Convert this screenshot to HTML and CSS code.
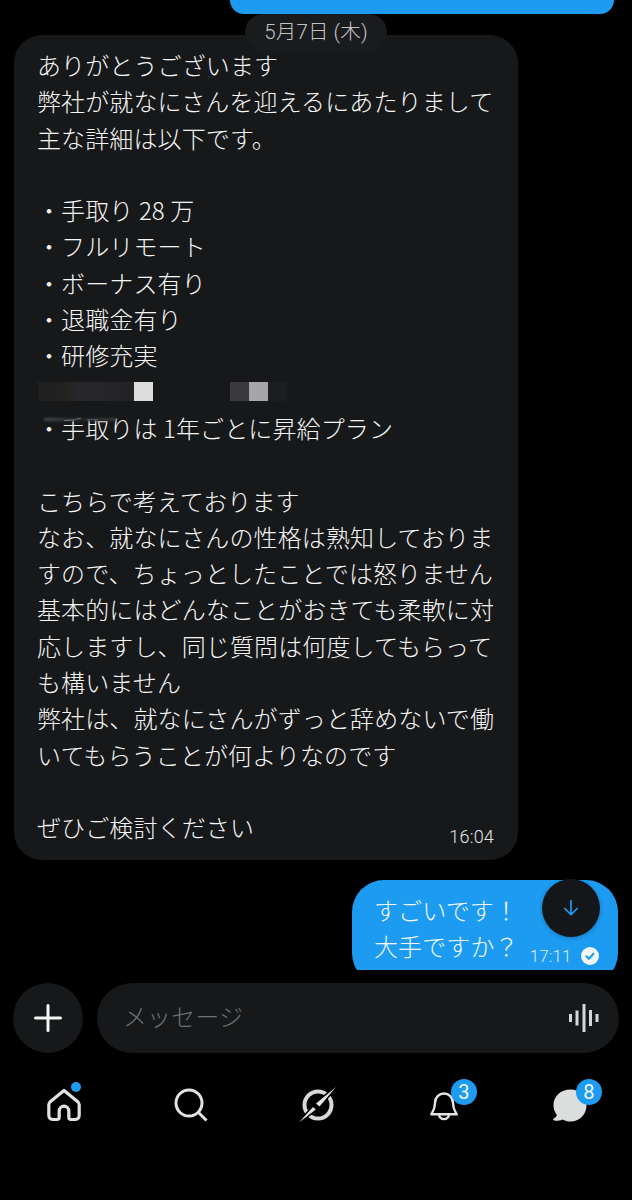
FILE: index.html
```html
<!DOCTYPE html>
<html lang="ja">
<head>
<meta charset="utf-8">
<title>メッセージ</title>
<link rel="stylesheet" href="styles.css">
</head>
<body>
<main class="app">
  <section class="messages">
    <div class="sent-top"></div>
    <div class="date-pill">5月7日 (木)</div>
    <article class="bubble-in">
      <div class="line">ありがとうございます</div>
      <div class="line">弊社が就なにさんを迎えるにあたりまして</div>
      <div class="line">主な詳細は以下です。</div>
      <div class="line">&nbsp;</div>
      <div class="line">・手取り 28 万</div>
      <div class="line">・フルリモート</div>
      <div class="line">・ボーナス有り</div>
      <div class="line">・退職金有り</div>
      <div class="line">・研修充実</div>
      <div class="line redact">
        <span class="cell c1"></span><span class="cell c2"></span><span class="cell c3"></span><span class="cell c4"></span><span class="cell c5"></span>
      </div>
      <div class="line streaked"><span class="streak"></span>・手取りは 1年ごとに昇給プラン</div>
      <div class="line">&nbsp;</div>
      <div class="line">こちらで考えております</div>
      <div class="line">なお、就なにさんの性格は熟知しておりま</div>
      <div class="line">すので、ちょっとしたことでは怒りません</div>
      <div class="line">基本的にはどんなことがおきても柔軟に対</div>
      <div class="line">応しますし、同じ質問は何度してもらって</div>
      <div class="line">も構いません</div>
      <div class="line">弊社は、就なにさんがずっと辞めないで働</div>
      <div class="line">いてもらうことが何よりなのです</div>
      <div class="line">&nbsp;</div>
      <div class="line last"><span>ぜひご検討ください</span><time class="time-in">16:04</time></div>
    </article>
    <article class="bubble-out">
      <div class="line">すごいです！</div>
      <div class="line reply"><span>大手ですか？</span>
        <span class="meta"><time>17:11</time>
          <svg class="check" viewBox="0 0 18 18" aria-hidden="true"><circle cx="9" cy="9" r="9" fill="#f2f6f9"/><path d="M5.400 9.300l2.500 2.400 4.600-5" fill="none" stroke="#1d9bf0" stroke-width="2" stroke-linecap="round" stroke-linejoin="round"/></svg>
        </span>
      </div>
    </article>
    <button class="scroll-down" aria-label="下へ">
      <svg viewBox="0 0 20 20" width="20" height="20" aria-hidden="true"><path d="M10 2.500v14M3.800 10.500l6.200 6.200 6.200-6.200" fill="none" stroke="#1d9bf0" stroke-width="1.700" stroke-linecap="round" stroke-linejoin="round"/></svg>
    </button>
  </section>

  <section class="composer">
    <button class="plus" aria-label="追加">
      <svg viewBox="0 0 28 28" width="28" height="28" aria-hidden="true"><path d="M14 1.500v25M1.500 14h25" fill="none" stroke="#f4f5f5" stroke-width="3" stroke-linecap="round"/></svg>
    </button>
    <div class="input">
      <span class="placeholder">メッセージ</span>
      <svg viewBox="0 0 30 30" width="30" height="30" aria-hidden="true"><path d="M1.500 11v8M8 7.500v15M15 1v28M21.500 7v16M28 11v8" fill="none" stroke="#d6d7d8" stroke-width="3"/></svg>
    </div>
  </section>

  <nav class="tabs">
    <div class="tab">
      <svg viewBox="0 0 34 34" width="34" height="34" aria-hidden="true"><path d="M17 2.500L3.500 13.500c-1 .8-1.700 1.900-1.700 3.200v10.500c0 2.500 1.800 4.300 4.300 4.300h3.900c1.300 0 2.200-.9 2.200-2.200v-6.300a4.800 4.800 0 0 1 9.600 0v6.300c0 1.300.9 2.200 2.200 2.200h3.900c2.500 0 4.300-1.800 4.300-4.300V16.700c0-1.300-.7-2.400-1.700-3.200z" fill="none" stroke="#e2e3e3" stroke-width="3.200" stroke-linejoin="round"/></svg>
      <span class="dot"></span>
    </div>
    <div class="tab">
      <svg viewBox="0 0 34 34" width="34" height="34" aria-hidden="true"><circle cx="15" cy="15" r="13" fill="none" stroke="#e2e3e3" stroke-width="3"/><path d="M24.500 24.500l8 8" fill="none" stroke="#e2e3e3" stroke-width="3"/></svg>
    </div>
    <div class="tab">
      <svg viewBox="0 0 40 40" width="40" height="40" aria-hidden="true"><circle cx="20" cy="20" r="13.500" fill="none" stroke="#d8d9d9" stroke-width="4"/><path d="M38 2L21.500 21.500 18 18.500zM1 37.500L15 22l2.800 2.400z" fill="#e4e5e5" stroke="#000" stroke-width="3" paint-order="stroke"/></svg>
    </div>
    <div class="tab">
      <svg class="bell" viewBox="0 0 32 34" aria-hidden="true"><path d="M5.800 13a10.200 10.200 0 0 1 20.400 0c0 7 2.300 10 4.300 13.500H1.500C3.500 23 5.800 20 5.800 13z" fill="none" stroke="#e2e3e3" stroke-width="2.800" stroke-linejoin="round"/><path d="M10.500 27a5.500 5 0 0 0 11 0" fill="none" stroke="#e2e3e3" stroke-width="2.800"/></svg>
      <span class="badge badge-bell">3</span>
    </div>
    <div class="tab">
      <svg class="chat" viewBox="0 0 36 34" aria-hidden="true"><path d="M19 .5C9 .5 1.500 7.500 1.500 16.500c0 4 1.300 7.500 3.500 10.200-.5 1.600-2 3.300-4 4.300 0 1.300 1.500 1.800 3 1.800 2.500 0 4.800-.5 6.600-1.500 2.500 1.300 5.400 2.200 8.400 2.200 9.500 0 16.500-7.500 16.500-16.500S28.500.5 19 .5z" fill="#dcdddd"/></svg>
      <span class="badge badge-chat">8</span>
    </div>
  </nav>
</main>
</body>
</html>
```

FILE: styles.css
```css
* { box-sizing: border-box; }
html, body { margin: 0; padding: 0; background: #000; }
body {
  width: 632px;
  height: 1200px;
  overflow: hidden;
  font-family: "Noto Sans CJK JP", "Noto Sans", sans-serif;
  font-weight: 300;
  font-size: 24px;
  letter-spacing: .12px;
  color: #f4f5f5;
}
button { border: 0; padding: 0; font: inherit; }

.app { display: flex; flex-direction: column; height: 1200px; }

.messages { position: relative; height: 970px; overflow: hidden; flex: none; }

.sent-top {
  margin-left: 230px;
  width: 384px;
  height: 14px;
  background: #1d9bf0;
  border-radius: 0 0 28px 28px;
}
.date-pill {
  position: absolute;
  left: 245px;
  top: 14px;
  width: 142px;
  height: 37px;
  border-radius: 18px;
  background: #1a1b1d;
  color: #c2c3c5;
  font-family: "Roboto", "Noto Sans CJK JP", sans-serif;
  font-size: 20.5px;
  line-height: 36px;
  text-align: center;
}

.line { height: 36.3px; line-height: 36.3px; white-space: nowrap; }

.bubble-in {
  margin: 21px 0 0 14px;
  width: 504px;
  height: 825px;
  padding: 12px 24px 12px 23px;
  background: #17181a;
  border-radius: 28px;
}
.last { display: flex; justify-content: space-between; }
.time-in {
  font-family: "Roboto", sans-serif;
  font-weight: 300;
  font-size: 18px;
  color: #e4e5e6;
  align-self: flex-end;
  line-height: 18px;
  letter-spacing: .2px;
}

.redact { display: flex; align-items: center; margin-left: 1px; }
.cell { display: block; height: 19px; }
.c1 { width: 96px; background: linear-gradient(90deg, #1f2022, #24211f 30%, #28282a 40%, #232325); }
.c2 { width: 19px; background: #dcdcdc; }
.c3 { width: 77px; background: transparent; }
.c4 { width: 19px; background: #3a3a3c; }
.c5 { width: 19px; background: #a6a6a8; box-shadow: 19px 0 0 #1c1d20; }

.streaked { position: relative; }
.streak {
  position: absolute;
  left: 7px;
  top: 8px;
  width: 72px;
  height: 3px;
  background: linear-gradient(90deg, #4a4a4c, #262628 50%, #3a3a3c);
  filter: blur(1.2px);
}

.bubble-out {
  margin: 20px 0 0 352px;
  width: 266px;
  height: 105px;
  padding: 12px 0 0 22px;
  background: #1d9bf0;
  border-radius: 32px;
  color: #f0f7fc;
}
.reply { display: flex; align-items: flex-end; }
.meta {
  display: flex;
  align-items: center;
  gap: 9px;
  margin-left: 11px;
  height: 18px;
  font-family: "Roboto", sans-serif;
  font-weight: 300;
  font-size: 17px;
  line-height: 18px;
  color: #dceffc;
}
.check { width: 18px; height: 18px; display: block; }

.scroll-down {
  position: absolute;
  left: 542px;
  top: 879px;
  width: 58px;
  height: 58px;
  border-radius: 50%;
  background: #14161a;
  display: flex;
  align-items: center;
  justify-content: center;
  box-shadow: 0 1px 4px rgba(0,0,0,.25);
}

.composer {
  display: flex;
  gap: 14px;
  padding: 13px 13px 0;
  flex: none;
}
.plus {
  width: 70px;
  height: 70px;
  border-radius: 50%;
  background: #17181a;
  display: flex;
  align-items: center;
  justify-content: center;
  flex: none;
}
.input {
  flex: 1;
  height: 70px;
  border-radius: 35px;
  background: #17181a;
  display: flex;
  align-items: center;
  justify-content: space-between;
  padding: 0 20px 0 26px;
}
.placeholder { color: #6e7174; line-height: 66px; height: 70px; }

.tabs {
  display: grid;
  grid-template-columns: repeat(5, 127px);
  margin-top: 27px;
  height: 50px;
  flex: none;
}
.tab {
  position: relative;
  display: flex;
  align-items: center;
  justify-content: center;
}
.bell { width: 28px; height: 30px; margin-top: 2px; margin-left: -1px; }
.chat { width: 35px; height: 33px; margin-right: 4px; }
.dot {
  position: absolute;
  left: 71px;
  top: 2px;
  width: 10px;
  height: 10px;
  border-radius: 50%;
  background: #1d9bf0;
}
.badge {
  position: absolute;
  top: -1px;
  width: 26px;
  height: 26px;
  border-radius: 50%;
  background: #1d9bf0;
  color: #f2f8fd;
  font-family: "Roboto", sans-serif;
  font-weight: 400;
  font-size: 20px;
  line-height: 26px;
  text-align: center;
}
.badge-bell { left: 70px; }
.badge-chat { left: 68px; }
```
